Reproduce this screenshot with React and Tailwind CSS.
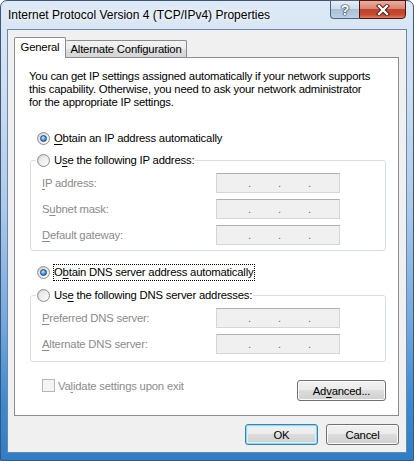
import React from 'react';

function U({ children }) {
  return <span className="underline decoration-1 underline-offset-[2px]">{children}</span>;
}

function Radio({ checked }) {
  return (
    <span className="flex h-[13px] w-[13px] shrink-0 items-center justify-center rounded-full border border-[#8e8f8f] bg-[linear-gradient(135deg,#c9c9c9,#ffffff)]">
      <span className="flex h-[9px] w-[9px] items-center justify-center rounded-full bg-[linear-gradient(135deg,#e2e2e2,#fbfbfb)]">
        {checked && (
          <span className="h-[7px] w-[7px] rounded-full border border-[#17447a] bg-[radial-gradient(circle_at_40%_35%,#c4ecff_0%,#4d9de2_50%,#1d5a9c_100%)]" />
        )}
      </span>
    </span>
  );
}

function IpBox() {
  return (
    <div className="flex h-[20px] w-[124px] items-center border border-[#d3d6d9] border-t-[#adb1b5] bg-[#f0f0f0] pl-[31px] text-[#6d6d6d]">
      <span className="w-[30px]">.</span>
      <span className="w-[30px]">.</span>
      <span>.</span>
    </div>
  );
}

function Field({ children }) {
  return (
    <div className="flex items-center">
      <span className="w-[180px] pl-[6px] text-[#8b8b8b]">{children}</span>
      <IpBox />
    </div>
  );
}

function Button({ children, primary, className = '' }) {
  const look = primary
    ? 'border-[#3c7fb1] shadow-[inset_0_0_0_1px_#8fd8f7,inset_0_0_0_2px_#d4f0fc]'
    : 'border-[#707070] shadow-[inset_0_0_0_1px_#fbfbfb]';
  return (
    <button
      className={`flex h-[21px] items-center justify-center rounded-[3px] border bg-[linear-gradient(to_bottom,#f2f2f2_0%,#ebebeb_45%,#dddddd_50%,#cfcfcf_100%)] text-black ${look} ${className}`}
    >
      {children}
    </button>
  );
}

export default function App() {
  return (
    <div className="flex h-[461px] w-[414px] flex-col rounded-t-[7px] border border-[#3d5675] bg-[linear-gradient(to_bottom,#dde9f6_0%,#cfdff1_18%,#acc9ea_45%,#74a8dd_70%,#3a8ad2_88%,#2f7dc6_100%)] font-['Liberation_Sans',Arial,sans-serif] text-[11.3px] leading-[14px] tracking-[-0.2px] text-black">
      {/* title bar */}
      <div className="flex h-[28px] shrink-0 items-start">
        <span className="pl-[7px] pt-[7px] text-[12px] tracking-normal [text-shadow:0_0_6px_#ffffff,0_0_10px_#ffffff]">
          Internet Protocol Version 4 (TCP/IPv4) Properties
        </span>
        <div className="-mt-px ml-auto mr-[7px] flex h-[19px]">
          <div className="flex w-[29px] items-center justify-center rounded-bl-[4px] border border-r-0 border-[#4c6484] bg-[linear-gradient(to_bottom,#e8eef6_0%,#d0dded_45%,#a9bfd9_50%,#bccfe5_100%)] text-[14px] font-bold text-white [text-shadow:0_0_1px_#1d2f45,0_0_1px_#1d2f45,0_0_2px_#1d2f45]">
            ?
          </div>
          <div className="flex w-[47px] items-center justify-center rounded-br-[4px] border border-[#4a1710] bg-[linear-gradient(to_bottom,#eaaea1_0%,#d98573_45%,#c2422c_50%,#c74a30_80%,#de7d62_100%)]">
            <svg width="14" height="12" viewBox="0 0 14 12">
              <path d="M3 2 L11 10 M11 2 L3 10" stroke="#4a1710" strokeWidth="4.2" strokeLinecap="square" />
              <path d="M3 2 L11 10 M11 2 L3 10" stroke="#ffffff" strokeWidth="2.4" strokeLinecap="square" />
            </svg>
          </div>
        </div>
      </div>

      {/* client area */}
      <div className="mx-[6px] flex h-[424px] flex-col border border-[#6a88aa] bg-[#f0f0f0] pl-[6px] pr-[7px] pt-[7px]">
        {/* tabs */}
        <div className="flex h-[20px] items-end">
          <div className="relative z-10 -mb-px flex h-[21px] w-[52px] items-center justify-center rounded-t-[2px] border border-b-0 border-[#898c95] bg-white pb-[2px]">
            General
          </div>
          <div className="flex h-[17px] w-[121px] items-center justify-center rounded-t-[2px] border border-b-0 border-l-0 border-[#898c95] bg-[linear-gradient(to_bottom,#f3f3f3_0%,#ebebeb_50%,#dedede_51%,#d6d6d6_100%)]">
            Alternate Configuration
          </div>
        </div>

        {/* panel */}
        <div className="flex h-[359px] flex-col border border-[#898c95] bg-white">
          <p className="mt-[12px] pl-[14px] leading-[13px]">
            You can get IP settings assigned automatically if your network supports
            <br />
            this capability. Otherwise, you need to ask your network administrator
            <br />
            for the appropriate IP settings.
          </p>

          <div className="mt-[22px] flex h-[14px] items-center gap-[4px] pl-[22px]">
            <Radio checked />
            <span>
              <U>O</U>btain an IP address automatically
            </span>
          </div>

          <fieldset className="ml-[15px] mt-[8px] w-[356px] rounded-[3px] border border-[#d5dfe5] px-[5px] pb-[5px]">
            <legend className="px-[1px]">
              <span className="flex h-[14px] items-center gap-[4px]">
                <Radio />
                <span>
                  U<U>s</U>e the following IP address:
                </span>
              </span>
            </legend>
            <div className="mt-[6px] flex flex-col gap-[6px]">
              <Field>
                <U>I</U>P address:
              </Field>
              <Field>
                S<U>u</U>bnet mask:
              </Field>
              <Field>
                <U>D</U>efault gateway:
              </Field>
            </div>
          </fieldset>

          <div className="mt-[13px] flex h-[17px] items-center gap-[3px] pl-[22px]">
            <Radio checked />
            <span className="border border-dotted border-black pr-px leading-[15px]">
              O<U>b</U>tain DNS server address automatically
            </span>
          </div>

          <fieldset className="ml-[15px] mt-[7px] w-[356px] rounded-[3px] border border-[#d5dfe5] px-[5px] pb-[7px]">
            <legend className="px-[1px]">
              <span className="flex h-[14px] items-center gap-[4px]">
                <Radio />
                <span>
                  Us<U>e</U> the following DNS server addresses:
                </span>
              </span>
            </legend>
            <div className="mt-[6px] flex flex-col gap-[6px]">
              <Field>
                <U>P</U>referred DNS server:
              </Field>
              <Field>
                <U>A</U>lternate DNS server:
              </Field>
            </div>
          </fieldset>

          <div className="mt-[17px] flex items-start justify-between pl-[27px] pr-[12px]">
            <div className="flex h-[13px] items-center gap-[3px]">
              <span className="h-[13px] w-[13px] border border-[#b7b7b7] bg-[#f4f4f4]" />
              <span className="text-[#8b8b8b]">
                Va<U>l</U>idate settings upon exit
              </span>
            </div>
            <Button className="mt-px w-[89px]">
              Ad<U>v</U>anced...
            </Button>
          </div>
        </div>

        {/* bottom buttons */}
        <div className="mt-[8px] flex justify-end gap-[8px]">
          <Button primary className="w-[73px]">
            OK
          </Button>
          <Button className="w-[73px]">Cancel</Button>
        </div>
      </div>
    </div>
  );
}
